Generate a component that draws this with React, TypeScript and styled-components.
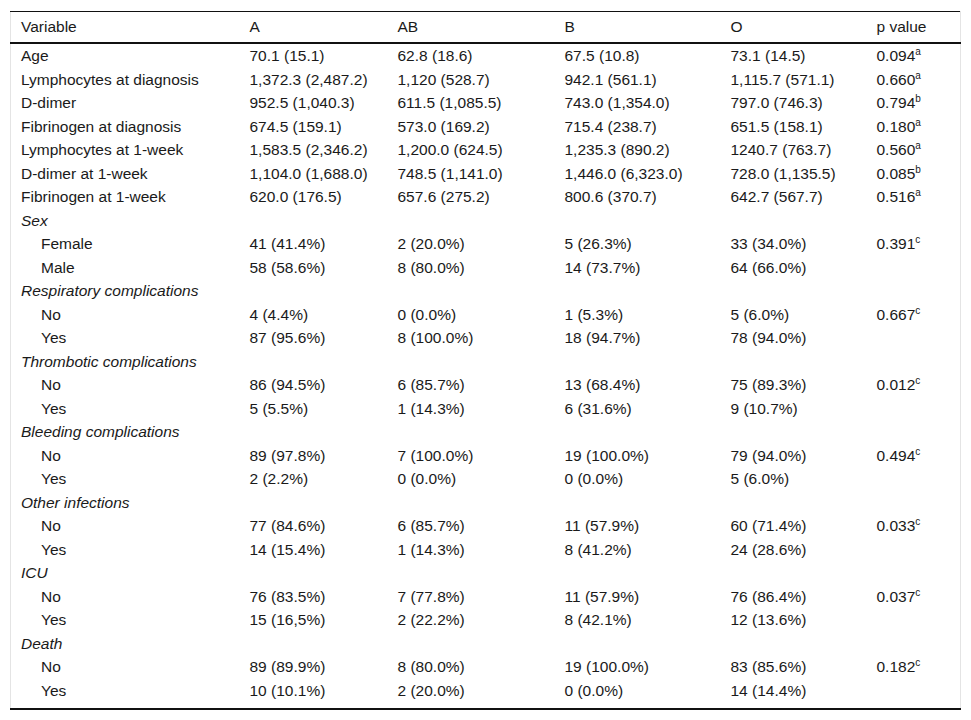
import styled, { createGlobalStyle } from "styled-components";

const GlobalStyle = createGlobalStyle`
    body {
        margin: 0;
        background: #ffffff;
        font-family: "Liberation Sans", Arial, sans-serif;
        color: #1a1a1a;
    }
`;

// Outer frame with the faint grey side rules
const Frame = styled.div`
    padding: 11px 11px 0 10px;
`;

const Table = styled.table`
    width: 950px;
    border-collapse: collapse;
    table-layout: fixed;
    border-top: 1px solid #111;
    border-bottom: 2px solid #111;
    border-left: 1px solid #e4e4e4;
    border-right: 1px solid #e4e4e4;
    font-size: 15.5px;
`;

const HeadCell = styled.th`
    text-align: left;
    font-weight: normal;
    height: 30px;
    padding: 0 10px;
    border-bottom: 2px solid #111;
    vertical-align: middle;
    line-height: 28px;
`;

// indent is used for the category levels (Female, Male, No, Yes...)
const Cell = styled.td<{ $indent?: boolean; $group?: boolean; $last?: boolean }>`
    height: 23.5px;
    padding: 0 10px ${(p) => (p.$last ? "6px" : "0")} ${(p) => (p.$indent ? "30px" : "10px")};
    font-style: ${(p) => (p.$group ? "italic" : "normal")};
    white-space: nowrap;
    vertical-align: ${(p) => (p.$last ? "top" : "middle")};
    line-height: 23.5px;
`;

const Sup = styled.sup`
    font-size: 10px;
    line-height: 0;
    vertical-align: 6px;
`;

type Row = { label: string; values?: string[]; p?: [string, string]; kind?: "group" | "sub" };

const rows: Row[] = [
    { label: "Age", values: ["70.1 (15.1)", "62.8 (18.6)", "67.5 (10.8)", "73.1 (14.5)"], p: ["0.094", "a"] },
    { label: "Lymphocytes at diagnosis", values: ["1,372.3 (2,487.2)", "1,120 (528.7)", "942.1 (561.1)", "1,115.7 (571.1)"], p: ["0.660", "a"] },
    { label: "D-dimer", values: ["952.5 (1,040.3)", "611.5 (1,085.5)", "743.0 (1,354.0)", "797.0 (746.3)"], p: ["0.794", "b"] },
    { label: "Fibrinogen at diagnosis", values: ["674.5 (159.1)", "573.0 (169.2)", "715.4 (238.7)", "651.5 (158.1)"], p: ["0.180", "a"] },
    { label: "Lymphocytes at 1-week", values: ["1,583.5 (2,346.2)", "1,200.0 (624.5)", "1,235.3 (890.2)", "1240.7 (763.7)"], p: ["0.560", "a"] },
    { label: "D-dimer at 1-week", values: ["1,104.0 (1,688.0)", "748.5 (1,141.0)", "1,446.0 (6,323.0)", "728.0 (1,135.5)"], p: ["0.085", "b"] },
    { label: "Fibrinogen at 1-week", values: ["620.0 (176.5)", "657.6 (275.2)", "800.6 (370.7)", "642.7 (567.7)"], p: ["0.516", "a"] },
    { label: "Sex", kind: "group" },
    { label: "Female", kind: "sub", values: ["41 (41.4%)", "2 (20.0%)", "5 (26.3%)", "33 (34.0%)"], p: ["0.391", "c"] },
    { label: "Male", kind: "sub", values: ["58 (58.6%)", "8 (80.0%)", "14 (73.7%)", "64 (66.0%)"] },
    { label: "Respiratory complications", kind: "group" },
    { label: "No", kind: "sub", values: ["4 (4.4%)", "0 (0.0%)", "1 (5.3%)", "5 (6.0%)"], p: ["0.667", "c"] },
    { label: "Yes", kind: "sub", values: ["87 (95.6%)", "8 (100.0%)", "18 (94.7%)", "78 (94.0%)"] },
    { label: "Thrombotic complications", kind: "group" },
    { label: "No", kind: "sub", values: ["86 (94.5%)", "6 (85.7%)", "13 (68.4%)", "75 (89.3%)"], p: ["0.012", "c"] },
    { label: "Yes", kind: "sub", values: ["5 (5.5%)", "1 (14.3%)", "6 (31.6%)", "9 (10.7%)"] },
    { label: "Bleeding complications", kind: "group" },
    { label: "No", kind: "sub", values: ["89 (97.8%)", "7 (100.0%)", "19 (100.0%)", "79 (94.0%)"], p: ["0.494", "c"] },
    { label: "Yes", kind: "sub", values: ["2 (2.2%)", "0 (0.0%)", "0 (0.0%)", "5 (6.0%)"] },
    { label: "Other infections", kind: "group" },
    { label: "No", kind: "sub", values: ["77 (84.6%)", "6 (85.7%)", "11 (57.9%)", "60 (71.4%)"], p: ["0.033", "c"] },
    { label: "Yes", kind: "sub", values: ["14 (15.4%)", "1 (14.3%)", "8 (41.2%)", "24 (28.6%)"] },
    { label: "ICU", kind: "group" },
    { label: "No", kind: "sub", values: ["76 (83.5%)", "7 (77.8%)", "11 (57.9%)", "76 (86.4%)"], p: ["0.037", "c"] },
    { label: "Yes", kind: "sub", values: ["15 (16,5%)", "2 (22.2%)", "8 (42.1%)", "12 (13.6%)"] },
    { label: "Death", kind: "group" },
    { label: "No", kind: "sub", values: ["89 (89.9%)", "8 (80.0%)", "19 (100.0%)", "83 (85.6%)"], p: ["0.182", "c"] },
    { label: "Yes", kind: "sub", values: ["10 (10.1%)", "2 (20.0%)", "0 (0.0%)", "14 (14.4%)"] },
];

const colWidths = [229, 148, 167, 166, 146, 94];
const headers = ["Variable", "A", "AB", "B", "O", "p value"];

export default function App() {
    return (
        <Frame>
            <GlobalStyle />
            <Table>
                <colgroup>
                    {colWidths.map((w, i) => (
                        <col key={i} style={{ width: w }} />
                    ))}
                </colgroup>
                <thead>
                    <tr>
                        {headers.map((h) => (
                            <HeadCell key={h}>{h}</HeadCell>
                        ))}
                    </tr>
                </thead>
                <tbody>
                    {rows.map((r, i) => {
                        const last = i === rows.length - 1;
                        return (
                            <tr key={i}>
                                <Cell $indent={r.kind === "sub"} $group={r.kind === "group"} $last={last}>
                                    {r.label}
                                </Cell>
                                {[0, 1, 2, 3].map((j) => (
                                    <Cell key={j} $last={last}>
                                        {r.values ? r.values[j] : ""}
                                    </Cell>
                                ))}
                                <Cell $last={last}>
                                    {r.p && (
                                        <>
                                            {r.p[0]}
                                            <Sup>{r.p[1]}</Sup>
                                        </>
                                    )}
                                </Cell>
                            </tr>
                        );
                    })}
                </tbody>
            </Table>
        </Frame>
    );
}
